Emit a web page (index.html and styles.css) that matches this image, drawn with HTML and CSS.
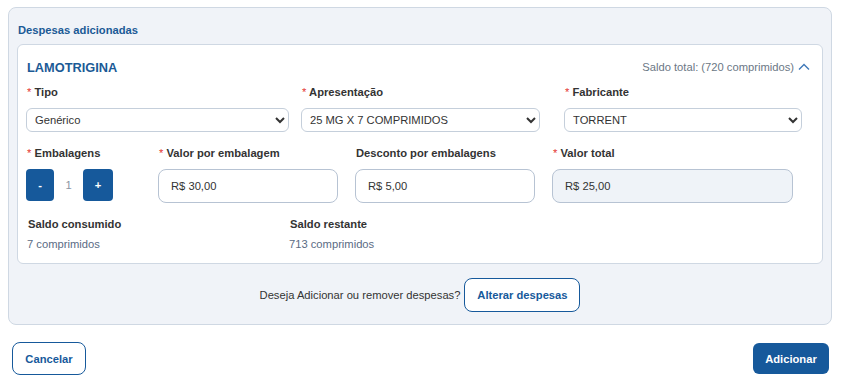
FILE: index.html
```html
<!DOCTYPE html>
<html lang="pt-BR">
<head>
  <meta charset="UTF-8">
  <meta name="viewport" content="width=device-width, initial-scale=1.0">
  <title>Despesas adicionadas</title>
  <link rel="stylesheet" href="styles.css">
</head>
<body>
  <div class="panel">
    <p class="panel-title">Despesas adicionadas</p>
    <div class="card">
      <div class="card-head">
        <h2>LAMOTRIGINA</h2>
        <span class="saldo-total">Saldo total: (720 comprimidos)
          <svg width="12" height="8" viewBox="0 0 12 8"><polyline points="1,6.5 6,1.5 11,6.5" fill="none" stroke="#3f78b8" stroke-width="1.4"/></svg>
        </span>
      </div>
      <div class="row row-selects">
        <div class="field f-tipo">
          <label><span class="req">*</span> Tipo</label>
          <select><option>Genérico</option></select>
        </div>
        <div class="field f-apres">
          <label><span class="req">*</span> Apresentação</label>
          <select><option>25 MG X 7 COMPRIMIDOS</option></select>
        </div>
        <div class="field f-fab">
          <label><span class="req">*</span> Fabricante</label>
          <select><option>TORRENT</option></select>
        </div>
      </div>
      <div class="row row-values">
        <div class="field f-emb">
          <label><span class="req">*</span> Embalagens</label>
          <div class="stepper">
            <button class="step-btn minus">-</button>
            <span class="step-val">1</span>
            <button class="step-btn plus">+</button>
          </div>
        </div>
        <div class="field f-valor">
          <label><span class="req">*</span> Valor por embalagem</label>
          <input type="text" value="R$ 30,00">
        </div>
        <div class="field f-desc">
          <label>Desconto por embalagens</label>
          <input type="text" value="R$ 5,00">
        </div>
        <div class="field f-total">
          <label><span class="req">*</span> Valor total</label>
          <input type="text" value="R$ 25,00" class="readonly" readonly>
        </div>
      </div>
      <div class="row row-saldo">
        <div class="saldo s-consumido">
          <strong>Saldo consumido</strong>
          <span>7 comprimidos</span>
        </div>
        <div class="saldo">
          <strong>Saldo restante</strong>
          <span>713 comprimidos</span>
        </div>
      </div>
    </div>
    <div class="change-row">
      <span>Deseja Adicionar ou remover despesas?</span>
      <button class="btn-outline btn-alterar">Alterar despesas</button>
    </div>
  </div>
  <div class="footer">
    <button class="btn-outline btn-cancel">Cancelar</button>
    <button class="btn-primary">Adicionar</button>
  </div>
</body>
</html>
```
FILE: styles.css
```css
body{
  margin: 0;
  font-family: "Liberation Sans", Arial, sans-serif;
  font-size: 11.2px;
  color: #333;
  background: #fff;
}
.panel{
  margin: 7px 11px 0 8px;
  padding: 15px 8px 12px 8px;
  background: #f0f3f8;
  border: 1px solid #cfd8e3;
  border-radius: 8px;
}
.panel-title{
  margin: 0 0 7px 1px;
  font-weight: bold;
  color: #1b5a96;
  line-height: 14px;
}
.card{
  background: #fff;
  border: 1px solid #cfd8e3;
  border-radius: 6px;
  padding: 13px 8px 12px 8px;
}
.card-head{
  display: flex;
  justify-content: space-between;
  align-items: center;
  height: 18px;
}
.card-head h2{
  margin: 0 0 0 1px;
  font-size: 12.8px;
  color: #1b5a96;
}
.saldo-total{
  color: #6b7785;
  display: flex;
  align-items: center;
  gap: 4px;
  margin-right: 4px;
}
.row{
  display: flex;
}
.field label{
  display: block;
  font-weight: bold;
  line-height: 14px;
  margin: 0 0 9px 1px;
  color: #333;
}
.req{
  color: #e53935;
  font-weight: normal;
}
.row-selects{
  margin-top: 9px;
}
.f-tipo{ width: 263px; margin-right: 12px; }
.f-apres{ width: 239px; margin-right: 24px; }
.f-fab{ width: 238px; }
select{
  width: 100%;
  height: 24px;
  border: 1px solid #c5cfdb;
  border-radius: 6px;
  background: #fff;
  font-family: inherit;
  font-size: 11.2px;
  color: #333;
  padding: 0 4px;
}
.row-values{
  margin-top: 14px;
}
.f-emb{ width: 132px; }
.f-valor{ width: 180px; margin-right: 17px; }
.f-desc{ width: 180px; margin-right: 17px; }
.f-total{ width: 241px; }
.stepper{
  display: flex;
  align-items: center;
}
.step-btn{
  width: 28px;
  height: 32px;
  border: none;
  border-radius: 4px;
  background: #16599b;
  color: #fff;
  font-weight: bold;
  font-family: inherit;
  font-size: 11.2px;
  padding: 0;
}
.step-btn.plus{ width: 30px; }
.step-val{
  width: 29px;
  text-align: center;
  color: #8a95a3;
}
input{
  box-sizing: border-box;
  width: 100%;
  height: 34px;
  border: 1px solid #b7c3d3;
  border-radius: 8px;
  padding: 0 12px;
  font-family: inherit;
  font-size: 11.2px;
  color: #333;
  background: #fff;
}
input.readonly{
  background: #eff3f8;
}
.row-saldo{
  margin-top: 14px;
}
.saldo{
  display: flex;
  flex-direction: column;
  gap: 6px;
  line-height: 14px;
}
.saldo strong{ margin-left: 2px; color: #333; }
.saldo span{ margin-left: 1px; color: #5a6b84; }
.s-consumido{ width: 262px; }
.change-row{
  display: flex;
  justify-content: center;
  align-items: center;
  gap: 4px;
  margin-top: 14px;
}
.btn-outline{
  background: #fff;
  border: 1px solid #16599b;
  border-radius: 8px;
  color: #16599b;
  font-weight: bold;
  font-family: inherit;
  font-size: 11.2px;
}
.btn-alterar{
  width: 116px;
  height: 34px;
}
.footer{
  display: flex;
  justify-content: space-between;
  align-items: center;
  padding: 17px 14px 0 12px;
}
.btn-cancel{
  width: 74px;
  height: 33px;
}
.btn-primary{
  width: 76px;
  height: 31px;
  background: #16599b;
  border: none;
  border-radius: 6px;
  color: #fff;
  font-weight: bold;
  font-family: inherit;
  font-size: 11.2px;
}
```
